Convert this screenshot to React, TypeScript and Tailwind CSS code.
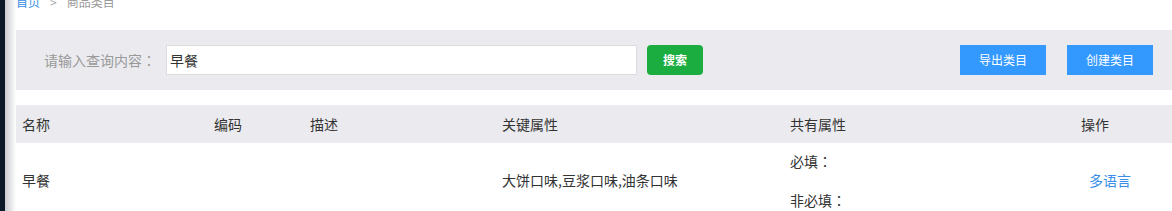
import React from "react";

const font = { fontFamily: '"Noto Sans CJK SC", "Noto Sans", sans-serif' };

function Colon() {
  return <span className="[font-family:'Noto_Sans_CJK_JP',sans-serif]">：</span>;
}

export default function App() {
  return (
    <div className="flex w-[1172px] h-[211px] overflow-hidden bg-white" style={font}>
      <div className="w-[5px] shrink-0 bg-[#0b1928]" />
      <div className="w-[11px] shrink-0 bg-gradient-to-r from-[#c9cbd0] to-white" />
      <div className="flex-1 flex flex-col">
        <div className="shrink-0 h-[20px] -mt-[8px] leading-[20px] text-[12px] flex items-center">
          <span className="text-[#3a8ee6]">首页</span>
          <span className="text-[#aaa] mx-[10px]">&gt;</span>
          <span className="text-[#999]">商品类目</span>
        </div>
        <div className="shrink-0 mt-[18px] h-[60px] bg-[#ebebef] flex items-center pl-[28px] pr-[19px]">
          <span className="text-[14px] text-[#999] w-[122px] shrink-0">
            请输入查询内容<Colon />
          </span>
          <div className="w-[471px] h-[30px] bg-white border border-[#dcdcdf] flex items-center pl-[3px] text-[14px] text-[#333]">
            早餐
          </div>
          <button className="ml-[10px] w-[56px] h-[30px] rounded-[4px] bg-[#1bad40] text-white text-[12px] font-bold">
            搜索
          </button>
          <div className="flex-1" />
          <button className="w-[86px] h-[30px] bg-[#3399ff] text-white text-[12px]">导出类目</button>
          <button className="ml-[21px] w-[86px] h-[30px] bg-[#3399ff] text-white text-[12px]">创建类目</button>
        </div>
        <div className="shrink-0 mt-[15px] h-[38px] bg-[#ebebef] flex items-center text-[14px] text-[#333]">
          <div className="w-[192px] pl-[6px]">名称</div>
          <div className="w-[96px] pl-[6px]">编码</div>
          <div className="w-[192px] pl-[6px]">描述</div>
          <div className="w-[288px] pl-[6px]">关键属性</div>
          <div className="w-[291px] pl-[6px]">共有属性</div>
          <div className="flex-1 pl-[6px]">操作</div>
        </div>
        <div className="shrink-0 flex items-center text-[14px] text-[#333]">
          <div className="w-[192px] pl-[6px]">早餐</div>
          <div className="w-[96px] pl-[6px]"></div>
          <div className="w-[192px] pl-[6px]"></div>
          <div className="w-[288px] pl-[6px]">大饼口味,豆浆口味,油条口味</div>
          <div className="w-[291px] pl-[6px] flex flex-col gap-[19px] py-[8px]">
            <div className="leading-[20px]">必填<Colon /></div>
            <div className="leading-[20px]">非必填<Colon /></div>
          </div>
          <div className="flex-1 pl-[14px] text-[#3a8ee6]">多语言</div>
        </div>
      </div>
    </div>
  );
}
